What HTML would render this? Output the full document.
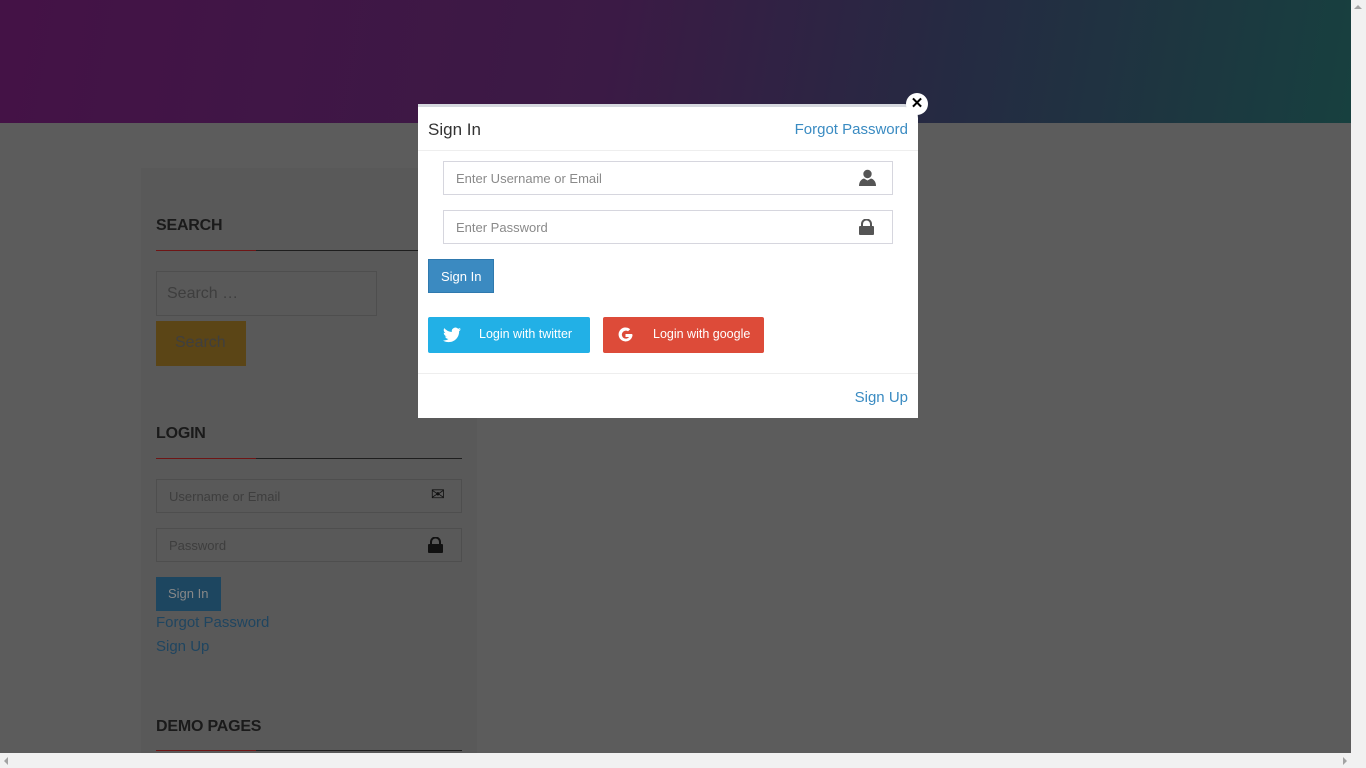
<!DOCTYPE html>
<html><head><meta charset="utf-8"><style>
*{box-sizing:border-box;margin:0;padding:0}
body{width:1366px;height:768px;overflow:hidden;background:#5c5c5c;font-family:"Liberation Sans",sans-serif;position:relative}
.hdr{position:absolute;left:0;top:0;width:1351px;height:123px;background:linear-gradient(100deg,#441246 0%,#3b1a45 45%,#252a42 70%,#17403f 100%)}
.side{position:absolute;left:141px;top:168px;width:336px;height:585px;background:#595959}
.h{position:absolute;left:156px;font-weight:bold;font-size:16px;color:#1a1a1a;letter-spacing:-0.2px}
.ln{position:absolute;left:156px;width:306px;height:1px;background:#1e1e1e}
.ln:before{content:"";position:absolute;left:0;top:0;width:100px;height:1px;background:#6e1515}
.inp{position:absolute;border:1px solid #4e4e4e;color:#3e3e3e;font-size:13px;white-space:nowrap}
.sb{position:absolute;white-space:nowrap}
.modal{position:absolute;left:418px;top:104px;width:500px;height:314px;background:#fff;border-top:3px solid #d5d8de;border-top-right-radius:14px}
.mi{position:absolute;border:1px solid #d6d6de;height:34px;width:450px;left:25px;font-size:13px;color:#8a8a8a;padding:9px 12px}
.btn{position:absolute;color:#fff;font-size:12.5px;white-space:nowrap}
</style></head><body>
<div class="hdr"></div>
<div class="side"></div>
<div class="h" style="top:217px">SEARCH</div>
<div class="ln" style="top:250px"></div>
<div class="inp" style="left:156px;top:271px;width:221px;height:45px;font-size:16px;padding:13px 10px">Search …</div>
<div class="sb" style="left:156px;top:321px;width:90px;height:45px;background:#5b4516;color:#3f3f3f;font-size:16px;padding:13px 19px">Search</div>
<div class="h" style="top:425px">LOGIN</div>
<div class="ln" style="top:458px"></div>
<div class="inp" style="left:156px;top:479px;width:306px;height:34px;padding:9px 12px">Username or Email<span style="position:absolute;right:16px;top:5px;color:#111;font-size:17px">✉</span></div>
<div class="inp" style="left:156px;top:528px;width:306px;height:34px;padding:9px 12px">Password<svg style="position:absolute;right:18px;top:8px" width="15" height="16" viewBox="0 0 15 16"><path d="M3 7V5a4.5 4.5 0 0 1 9 0v2" fill="none" stroke="#111" stroke-width="2"/><rect x="0" y="7" width="15" height="9" rx="1" fill="#111"/></svg></div>
<div class="sb" style="left:156px;top:577px;width:65px;height:34px;background:#1d4660;color:#888;font-size:13px;padding:9px 12px">Sign In</div>
<div class="sb" style="left:156px;top:614px;color:#1f4560;font-size:15px">Forgot Password</div>
<div class="sb" style="left:156px;top:638px;color:#1f4560;font-size:15px">Sign Up</div>
<div class="h" style="top:718px">DEMO PAGES</div>
<div class="ln" style="top:750px"></div>

<div class="modal">
<div style="position:absolute;left:10px;top:13px;font-size:17px;color:#333">Sign In</div>
<div style="position:absolute;right:10px;top:14px;font-size:15px;color:#3a8bc2">Forgot Password</div>
<div style="position:absolute;left:0;right:0;top:43px;height:1px;background:#eee"></div>
<div class="mi" style="top:54px">Enter Username or Email<svg style="position:absolute;right:16px;top:7px" width="17" height="17" viewBox="0 0 17 17"><circle cx="8.5" cy="5" r="4.2" fill="#555"/><path d="M0 17c0-5 3-7 5-7.5l3.5 2 3.5-2c2 .5 5 2.5 5 7.5z" fill="#555"/></svg></div>
<div class="mi" style="top:103px">Enter Password<svg style="position:absolute;right:18px;top:8px" width="15" height="16" viewBox="0 0 15 16"><path d="M3 7V5a4.5 4.5 0 0 1 9 0v2" fill="none" stroke="#555" stroke-width="2"/><rect x="0" y="7" width="15" height="9" rx="1" fill="#555"/></svg></div>
<div class="btn" style="left:10px;top:152px;width:66px;height:34px;background:#3b8ac1;border:1px solid #2f79ae;padding:9px 12px;font-size:13px">Sign In</div>
<div class="btn" style="left:10px;top:210px;width:162px;height:36px;background:#22b0e6;border-radius:2px;padding:10px 0 0 51px">Login with twitter<svg style="position:absolute;left:15px;top:10px" width="18" height="16" viewBox="0 0 24 20"><path d="M24 2.4a9.8 9.8 0 0 1-2.8.8A4.9 4.9 0 0 0 23.3.5a9.8 9.8 0 0 1-3.1 1.2A4.9 4.9 0 0 0 11.8 6 14 14 0 0 1 1.7.9a4.9 4.9 0 0 0 1.5 6.6A4.9 4.9 0 0 1 1 6.9a4.9 4.9 0 0 0 3.9 4.9 4.9 4.9 0 0 1-2.2.1 4.9 4.9 0 0 0 4.6 3.4A9.9 9.9 0 0 1 0 17.3 14 14 0 0 0 7.5 19.5c9.1 0 14-7.5 14-14v-.6A10 10 0 0 0 24 2.4z" fill="#fff"/></svg></div>
<div class="btn" style="left:185px;top:210px;width:161px;height:36px;background:#dd4b39;border-radius:2px;padding:10px 0 0 50px">Login with google<svg style="position:absolute;left:14px;top:10px" width="17" height="17" viewBox="0 0 17 17"><path d="M15 7H8.5v3h3.6A4 4 0 1 1 11 4.3l2.2-2.1A7 7 0 1 0 15.5 8.5c0-.5 0-1-.5-1.5z" fill="#fff"/></svg></div>
<div style="position:absolute;left:0;right:0;top:266px;height:1px;background:#eee"></div>
<div style="position:absolute;right:10px;top:282px;font-size:15px;color:#3a8bc2">Sign Up</div>
</div>
<div style="position:absolute;left:906px;top:93px;width:22px;height:22px;border-radius:50%;background:#fff;color:#000;font-weight:bold;font-size:15px;text-align:center;line-height:21px">✕</div>

<div style="position:absolute;left:1351px;top:0;width:15px;height:768px;background:#f1f1f1"></div>
<div style="position:absolute;left:1354px;top:5px;border:4px solid transparent;border-bottom:4px solid #a3a3a3;border-top:0"></div>
<div style="position:absolute;left:0;top:753px;width:1366px;height:15px;background:#f1f1f1"></div>
<div style="position:absolute;left:4px;top:757px;border:4px solid transparent;border-right:4px solid #a3a3a3;border-left:0"></div>
<div style="position:absolute;left:1343px;top:757px;border:4px solid transparent;border-left:4px solid #a3a3a3;border-right:0"></div>
</body></html>
